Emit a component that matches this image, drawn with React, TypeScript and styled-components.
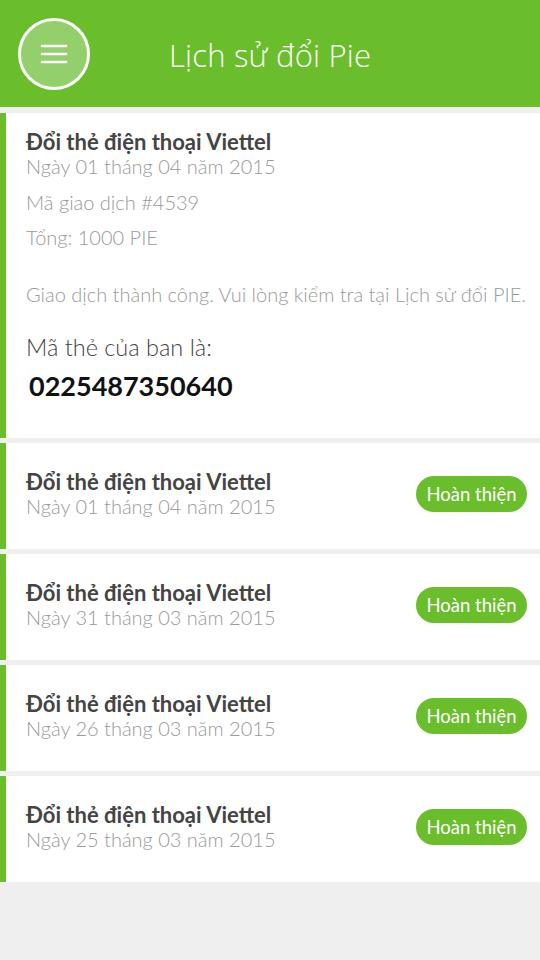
import styled, { createGlobalStyle } from 'styled-components';

const GlobalStyle = createGlobalStyle`
  html, body {
    margin: 0;
    padding: 0;
    background: #efefef;
    font-family: Lato, 'Noto Sans', sans-serif;
  }
`;

type Exchange = {
  id: number;
  title: string;
  date: string;
};

const history: Exchange[] = [
  { id: 1, title: 'Đổi thẻ điện thoại Viettel', date: 'Ngày 01 tháng 04 năm 2015' },
  { id: 2, title: 'Đổi thẻ điện thoại Viettel', date: 'Ngày 31 tháng 03 năm 2015' },
  { id: 3, title: 'Đổi thẻ điện thoại Viettel', date: 'Ngày 26 tháng 03 năm 2015' },
  { id: 4, title: 'Đổi thẻ điện thoại Viettel', date: 'Ngày 25 tháng 03 năm 2015' },
];

const MenuIcon = () => (
  <svg width='30' height='24' viewBox='0 0 30 24'>
    <g stroke='#fff' strokeWidth='2.6' strokeLinecap='round'>
      <line x1='3' y1='4' x2='27' y2='4' />
      <line x1='3' y1='12' x2='27' y2='12' />
      <line x1='3' y1='20' x2='27' y2='20' />
    </g>
  </svg>
);

const App = () => {
  return (
    <Page>
      <GlobalStyle />
      <Header>
        <MenuButton>
          <MenuIcon />
        </MenuButton>
        <HeaderTitle>Lịch sử đổi Pie</HeaderTitle>
      </Header>
      <List>
        <DetailCard>
          <CardTitle>Đổi thẻ điện thoại Viettel</CardTitle>
          <Meta>Ngày 01 tháng 04 năm 2015</Meta>
          <Meta $gap={11}>Mã giao dịch #4539</Meta>
          <Meta $gap={10}>Tổng: 1000 PIE</Meta>
          <Notice>Giao dịch thành công. Vui lòng kiểm tra tại Lịch sử đổi PIE.</Notice>
          <CodeLabel>Mã thẻ của ban là:</CodeLabel>
          <CodeValue>0225487350640</CodeValue>
        </DetailCard>
        {history.map((item) => (
          <RowCard key={item.id}>
            <RowText>
              <CardTitle>{item.title}</CardTitle>
              <Meta>{item.date}</Meta>
            </RowText>
            <StatusPill>Hoàn thiện</StatusPill>
          </RowCard>
        ))}
      </List>
    </Page>
  );
};

export default App;

const Page = styled.div`
  width: 540px;
  min-height: 960px;
  background: #efefef;
`;

const Header = styled.div`
  height: 107px;
  background: #6abd2b;
  display: flex;
  align-items: center;
  padding-left: 18px;
  box-sizing: border-box;
`;

const MenuButton = styled.div`
  width: 72px;
  height: 72px;
  border-radius: 50%;
  border: 3px solid #fff;
  background: #93cf6b;
  box-sizing: border-box;
  display: flex;
  align-items: center;
  justify-content: center;
`;

const HeaderTitle = styled.div`
  margin-left: 79px;
  color: #fff;
  font-family: 'Open Sans', 'Noto Sans', sans-serif;
  font-weight: 300;
  font-size: 31px;
  letter-spacing: 0.2px;
  margin-top: 2px;
`;

const List = styled.div`
  display: flex;
  flex-direction: column;
  gap: 5px;
  padding-top: 6px;
`;

const Card = styled.div`
  background: #fff;
  border-left: 6px solid #6abd2b;
  box-sizing: border-box;
`;

const DetailCard = styled(Card)`
  height: 325px;
  padding: 16px 0 0 20px;
`;

const RowCard = styled(Card)`
  height: 106px;
  display: flex;
  align-items: center;
  justify-content: space-between;
  padding: 0 13px 4px 20px;
`;

const RowText = styled.div`
  display: flex;
  flex-direction: column;
`;

const CardTitle = styled.div`
  font-size: 22px;
  font-weight: 700;
  color: #444;
  line-height: 25px;
`;

const Meta = styled.div<{ $gap?: number }>`
  font-size: 20px;
  font-weight: 300;
  color: #999;
  line-height: 25px;
  margin-top: ${(p) => p.$gap ?? 0}px;
`;

const Notice = styled.div`
  font-size: 20px;
  font-weight: 300;
  color: #999;
  margin-top: 32px;
  line-height: 24px;
  white-space: nowrap;
`;

const CodeLabel = styled.div`
  font-size: 23.5px;
  font-weight: 300;
  color: #444;
  margin-top: 27px;
  line-height: 28px;
`;

const CodeValue = styled.div`
  font-size: 27px;
  font-weight: 700;
  color: #111;
  margin: 10px 0 0 3px;
  line-height: 30px;
`;

const StatusPill = styled.div`
  width: 111px;
  height: 36px;
  border-radius: 18px;
  background: #6abd2b;
  color: #fff;
  font-size: 18.5px;
  display: flex;
  align-items: center;
  justify-content: center;
  box-sizing: border-box;
`;
